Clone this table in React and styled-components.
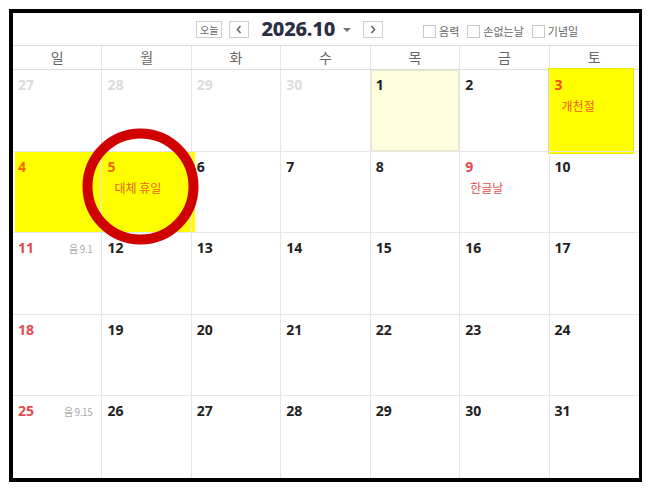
import React from "react";
import styled, { createGlobalStyle } from "styled-components";

const Global = createGlobalStyle`
  html, body { margin: 0; padding: 0; background: #fff; }
  body { font-family: "Noto Sans", "Noto Sans CJK KR", sans-serif; }
  * { box-sizing: border-box; }
`;

const Page = styled.div`
  padding: 9px 0 0 9px;
  width: 652px;
  height: 495px;
`;

const Frame = styled.div`
  width: 633px;
  height: 473px;
  border: 4px solid #000;
  border-right-width: 3px;
  display: flex;
  flex-direction: column;
  background: #fff;
`;

const Toolbar = styled.div`
  height: 33px;
  flex: none;
  border-bottom: 1px solid #dcdcdc;
  display: flex;
  align-items: center;
  padding-left: 183px;
`;

const Nav = styled.div`
  display: flex;
  align-items: center;
`;

const SmallButton = styled.button`
  height: 17px;
  min-width: ${(p) => p.$w || 20}px;
  padding: 0 3px;
  margin-right: ${(p) => p.$mr || 0}px;
  border: 1px solid #cfcfcf;
  background: #fff;
  color: #666;
  font-family: "Noto Sans CJK KR", sans-serif;
  font-size: 10px;
  line-height: 15px;
  display: flex;
  align-items: center;
  justify-content: center;
`;

const Title = styled.div`
  font-family: "Noto Sans", "Open Sans", sans-serif;
  font-weight: 800;
  font-size: 20px;
  color: #2b2e45;
  margin-left: 12px;
  letter-spacing: -0.2px;
  line-height: 24px;
`;

const Caret = styled.span`
  width: 0;
  height: 0;
  border-left: 4px solid transparent;
  border-right: 4px solid transparent;
  border-top: 4px solid #777;
  margin: 2px 12px 0 8px;
`;

const Options = styled.div`
  display: flex;
  align-items: center;
  margin-left: 40px;
  margin-top: 4px;
  gap: 8px;
`;

const Option = styled.label`
  display: flex;
  align-items: center;
  gap: 3px;
  font-family: "Noto Sans CJK KR", sans-serif;
  font-size: 11px;
  color: #666;
`;

const Box = styled.span`
  width: 13px;
  height: 13px;
  border: 1px solid #c8c8c8;
  background: #fff;
  display: inline-block;
`;

const WeekRow = styled.div`
  height: 24px;
  flex: none;
  display: grid;
  grid-template-columns: repeat(7, 1fr);
  border-bottom: 1px solid #dcdcdc;
`;

const WeekName = styled.div`
  font-family: "Noto Sans CJK KR", sans-serif;
  font-size: 14px;
  color: #666;
  text-align: center;
  line-height: 22px;
  border-right: ${(p) => (p.$last ? "none" : "1px solid #e6e6e6")};
`;

const Body = styled.div`
  position: relative;
  flex: 1;
  display: grid;
  grid-template-columns: repeat(7, 1fr);
  grid-template-rows: repeat(5, 1fr);
`;

const Cell = styled.div`
  position: relative;
  z-index: 1;
  padding: 5px 9px 0 5px;
  border-right: ${(p) => (p.$lastCol ? "none" : "1px solid #e6e6e6")};
  border-bottom: ${(p) => (p.$lastRow ? "none" : "1px solid #e6e6e6")};
  background: ${(p) => (p.$today ? "#ffffe0" : "transparent")};
  box-shadow: ${(p) => (p.$today ? "inset 0 0 0 1px #e8e8c4" : "none")};
`;

const DateLine = styled.div`
  display: flex;
  justify-content: space-between;
  align-items: baseline;
`;

const DayNum = styled.span`
  font-family: "Noto Sans", sans-serif;
  font-weight: 700;
  font-size: 14px;
  line-height: 19px;
  color: ${(p) => p.$color};
`;

const Lunar = styled.span`
  font-family: "Noto Sans CJK KR", sans-serif;
  font-size: 10px;
  color: #aaa;
  letter-spacing: -0.4px;
`;

const Holiday = styled.div`
  font-family: "Noto Sans CJK KR", sans-serif;
  font-size: 12px;
  margin: 3px 0 0 ${(p) => p.$indent || 6}px;
  color: ${(p) => p.$color};
`;

const Highlight = styled.div`
  position: absolute;
  z-index: 0;
  left: ${(p) => p.$x}px;
  top: ${(p) => p.$y}px;
  width: ${(p) => p.$w}px;
  height: ${(p) => p.$h}px;
  background: #ffff00;
  box-shadow: ${(p) => (p.$outline ? "inset 0 0 0 1px #e6e600" : "none")};
`;

const Ring = styled.svg`
  position: absolute;
  z-index: 2;
  left: 69px;
  top: 58px;
  pointer-events: none;
`;

const ChevronLeft = () => (
  <svg width="8" height="9" viewBox="0 0 8 9">
    <path d="M5.5 1 L2.5 4.5 L5.5 8" fill="none" stroke="#666" strokeWidth="1.6" />
  </svg>
);
const ChevronRight = () => (
  <svg width="8" height="9" viewBox="0 0 8 9">
    <path d="M2.5 1 L5.5 4.5 L2.5 8" fill="none" stroke="#666" strokeWidth="1.6" />
  </svg>
);

const RED = "#e5484f";
const ORANGE = "#f06a00";
const DARK = "#222";
const FADED = "#dcdcdc";

const cells = [];
const prev = [27, 28, 29, 30];
prev.forEach((d) => cells.push({ d, color: FADED }));
for (let d = 1; d <= 31; d++) {
  const idx = cells.length;
  const col = idx % 7;
  let color = col === 0 ? RED : DARK;
  const c = { d, color };
  if (d === 3) { c.color = "#ff4a00"; c.holiday = "개천절"; c.hcolor = "#f0601a"; c.indent = 7; }
  if (d === 4) c.color = ORANGE;
  if (d === 5) { c.color = ORANGE; c.holiday = "대체 휴일"; c.hcolor = "#e8641a"; c.indent = 7; }
  if (d === 9) { c.color = RED; c.holiday = "한글날"; c.hcolor = "#e05050"; c.indent = 5; }
  if (d === 1) c.today = true;
  if (d === 11) c.lunar = "음 9.1";
  if (d === 25) c.lunar = "음 9.15";
  cells.push(c);
}

const weekNames = ["일", "월", "화", "수", "목", "금", "토"];

export default function App() {
  return (
    <Page>
      <Global />
      <Frame>
        <Toolbar>
          <Nav>
            <SmallButton $w={26} $mr={7}>오늘</SmallButton>
            <SmallButton $w={20}><ChevronLeft /></SmallButton>
            <Title>2026.10</Title>
            <Caret />
            <SmallButton $w={20}><ChevronRight /></SmallButton>
          </Nav>
          <Options>
            <Option><Box />음력</Option>
            <Option><Box />손없는날</Option>
            <Option><Box />기념일</Option>
          </Options>
        </Toolbar>
        <WeekRow>
          {weekNames.map((n, i) => (
            <WeekName key={n} $last={i === 6}>{n}</WeekName>
          ))}
        </WeekRow>
        <Body>
          <Highlight $x={535} $y={-2} $w={86} $h={86} $outline />
          <Highlight $x={2} $y={82} $w={180} $h={80} />
          {cells.map((c, i) => (
            <Cell key={i} $lastCol={i % 7 === 6} $lastRow={i >= 28} $today={c.today}>
              <DateLine>
                <DayNum $color={c.color}>{c.d}</DayNum>
                {c.lunar && <Lunar>{c.lunar}</Lunar>}
              </DateLine>
              {c.holiday && (
                <Holiday $color={c.hcolor} $indent={c.indent}>{c.holiday}</Holiday>
              )}
            </Cell>
          ))}
          <Ring width="117" height="117" viewBox="0 0 117 117">
            <circle cx="58.5" cy="58.5" r="53" fill="none" stroke="#d00000" strokeWidth="10" />
          </Ring>
        </Body>
      </Frame>
    </Page>
  );
}
